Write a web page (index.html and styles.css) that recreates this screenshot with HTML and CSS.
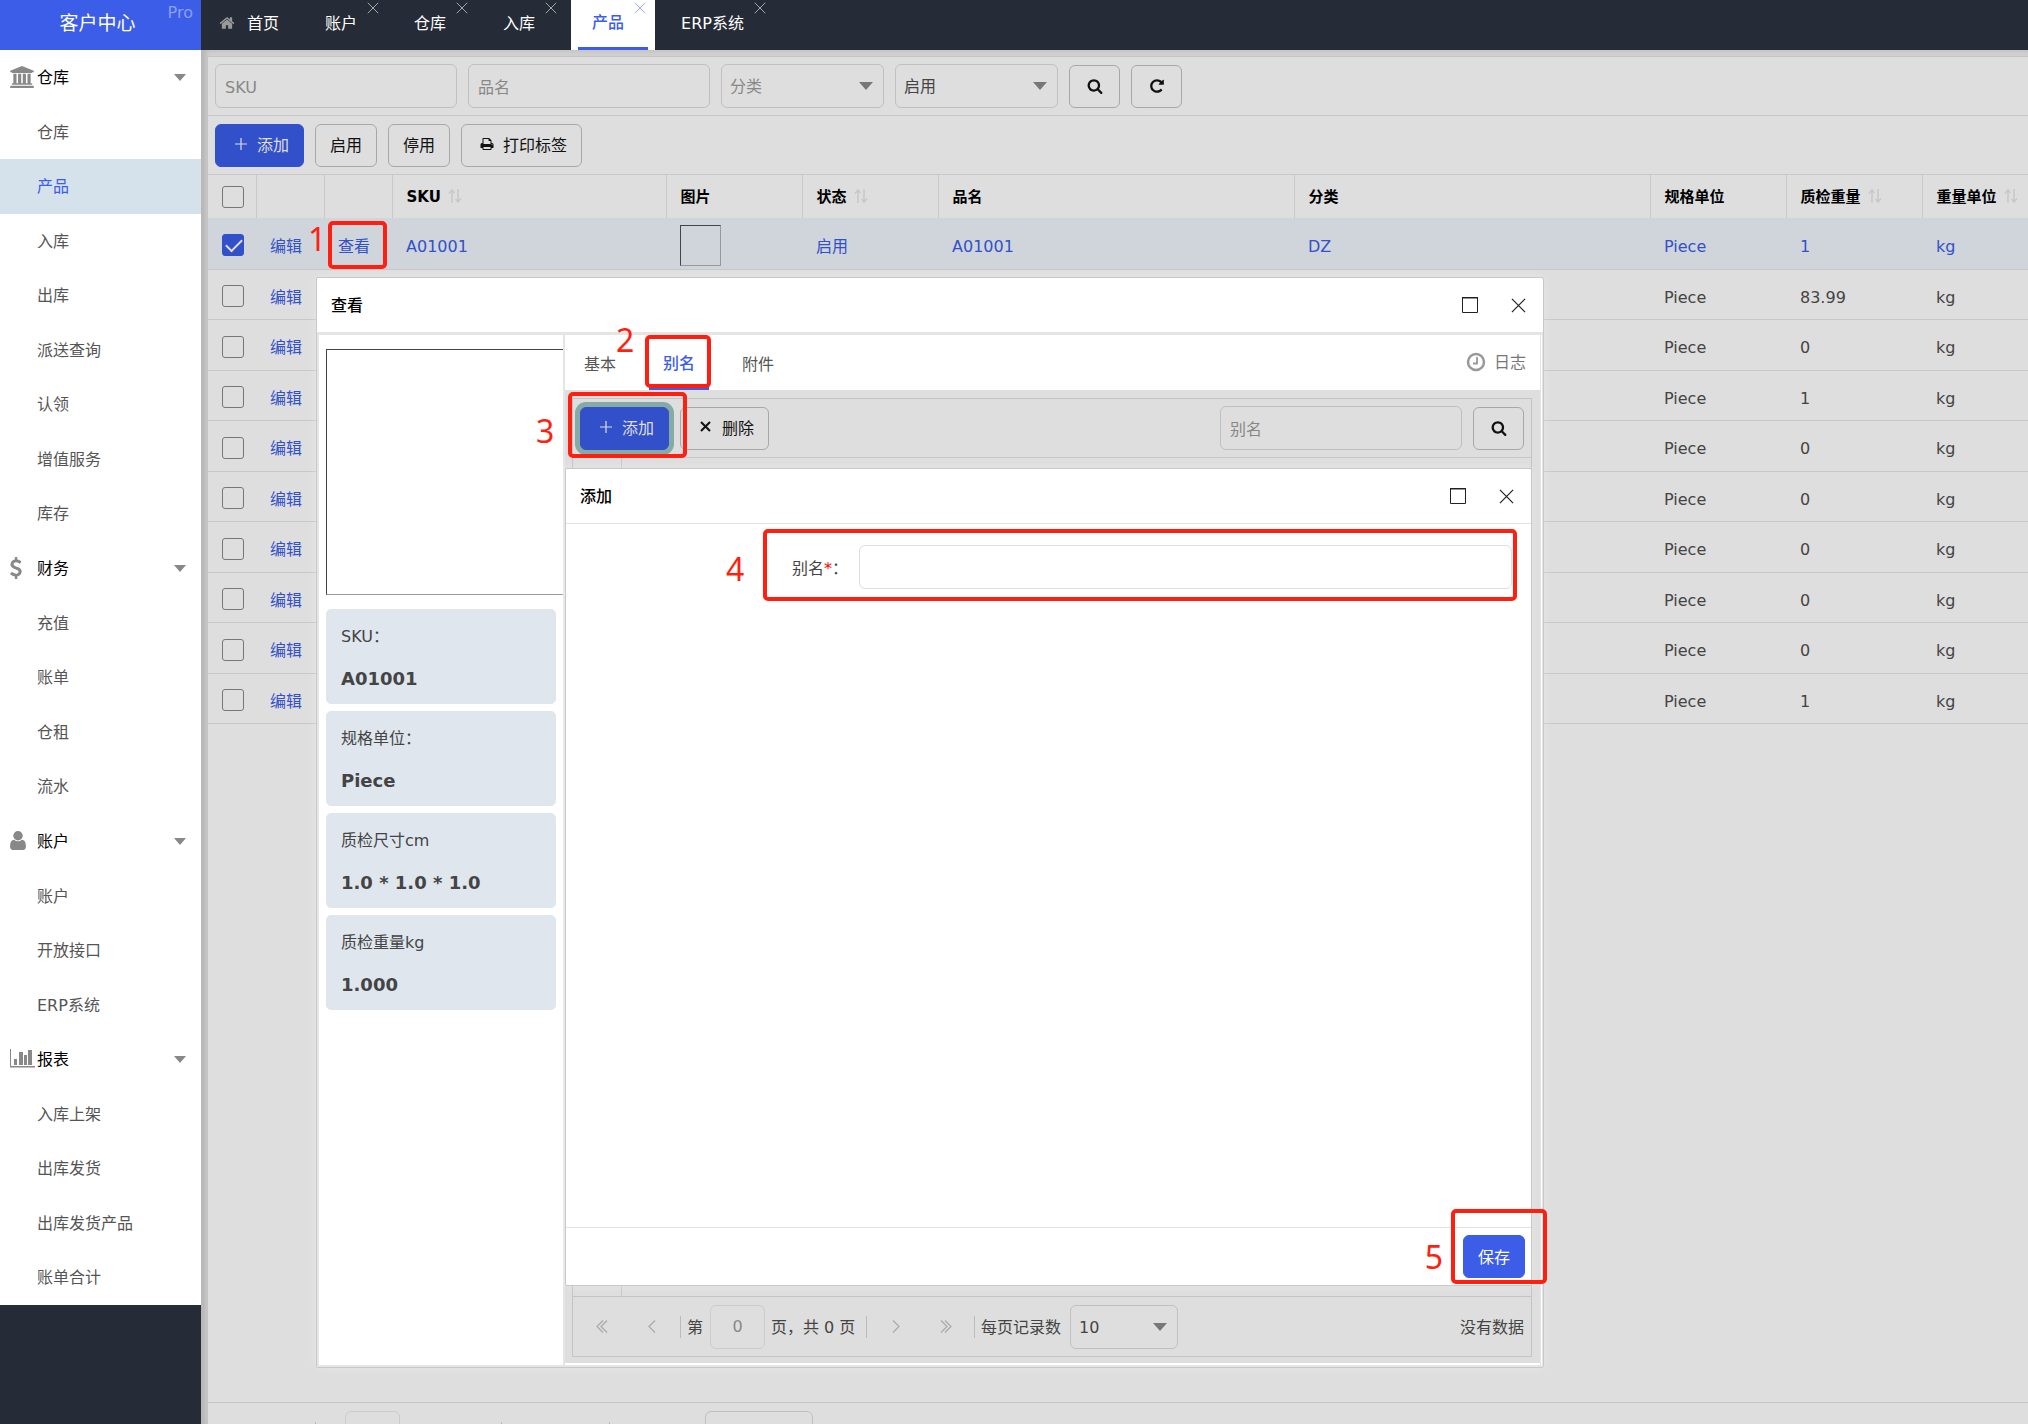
FILE: index.html
```html
<!DOCTYPE html>
<html lang="zh-CN">
<head>
<meta charset="utf-8">
<title>客户中心 - 产品</title>
<link rel="stylesheet" href="styles.css">
</head>
<body>
<svg class="defs" aria-hidden="true">
  <symbol id="i-home" viewBox="0 0 1792 1792"><path d="M1472 992v480q0 26-19 45t-45 19h-384v-384h-256v384h-384q-26 0-45-19t-19-45v-480q0-1 .5-3t.5-3l575-474 575 474q1 2 1 6zm223-69l-62 74q-8 9-21 11h-3q-13 0-21-7l-692-577-692 577q-12 8-24 7-13-2-21-11l-62-74q-8-10-7-23.5t11-21.5l719-599q32-26 76-26t76 26l244 204v-195q0-14 9-23t23-9h192q14 0 23 9t9 23v408l219 182q10 8 11 21.5t-7 23.5z"/></symbol>
  <symbol id="i-search" viewBox="0 0 1792 1792"><path d="M1216 832q0-185-131.5-316.5t-316.5-131.5-316.5 131.5-131.5 316.5 131.5 316.5 316.5 131.5 316.5-131.5 131.5-316.5zm512 832q0 52-38 90t-90 38q-54 0-90-38l-343-342q-179 124-399 124-143 0-273.5-55.5t-225-150-150-225-55.5-273.5 55.5-273.5 150-225 225-150 273.5-55.5 273.5 55.5 225 150 150 225 55.5 273.5q0 220-124 399l343 343q37 37 37 90z"/></symbol>
  <symbol id="i-repeat" viewBox="0 0 1792 1792"><path d="M1664 256v448q0 26-19 45t-45 19h-448q-42 0-59-40-17-39 14-69l138-138q-148-137-349-137-104 0-198.5 40.5t-163.5 109.5-109.5 163.5-40.5 198.5 40.5 198.5 109.5 163.5 163.5 109.5 198.5 40.5q119 0 225-52t179-147q7-10 23-12 15 0 25 9l137 138q9 8 9.5 20.5t-7.5 22.5q-109 132-264 204.5t-327 72.5q-156 0-298-61t-245-164-164-245-61-298 61-298 164-245 245-164 298-61q147 0 284.5 55.5t244.5 156.5l130-129q29-31 70-14 39 17 39 59z"/></symbol>
  <symbol id="i-print" viewBox="0 0 1792 1792"><path d="M448 1536h896v-256h-896v256zm0-640h896v-384h-160q-40 0-68-28t-28-68v-160h-640v640zm1152 64q0-26-19-45t-45-19-45 19-19 45 19 45 45 19 45-19 19-45zm128 0v416q0 13-9.5 22.5t-22.5 9.5h-224v160q0 40-28 68t-68 28h-960q-40 0-68-28t-28-68v-160h-224q-13 0-22.5-9.5t-9.5-22.5v-416q0-79 56.5-135.5t135.5-56.5h64v-544q0-40 28-68t68-28h672q40 0 88 20t76 48l152 152q28 28 48 76t20 88v256h64q79 0 135.5 56.5t56.5 135.5z"/></symbol>
  <symbol id="i-bank" viewBox="0 0 1920 1792"><path d="M960 0l960 384v128h-128q0 26-20.5 45t-48.5 19h-1526q-28 0-48.5-19t-20.5-45h-128v-128zm-704 640h256v768h128v-768h256v768h128v-768h256v768h128v-768h256v768h59q28 0 48.5 19t20.5 45v64h-1664v-64q0-26 20.5-45t48.5-19h59v-768zm1595 960q28 0 48.5 19t20.5 45v128h-1920v-128q0-26 20.5-45t48.5-19h1782z"/></symbol>
  <symbol id="i-user" viewBox="256 128 1280 1536"><path d="M1536 1399q0 109-62.5 187t-150.5 78h-854q-88 0-150.5-78t-62.5-187q0-85 8.5-160.5t31.5-152 58.5-131 94-89 134.5-34.5q131 128 313 128t313-128q76 0 134.5 34.5t94 89 58.5 131 31.5 152 8.5 160.5zm-256-887q0 159-112.5 271.5t-271.5 112.5-271.5-112.5-112.5-271.5 112.5-271.5 271.5-112.5 271.5 112.5 112.5 271.5z"/></symbol>
  <symbol id="i-dollar" viewBox="430 0 940 1792"><path d="M1362 1185q0 153-99.5 263.5t-258.5 136.5v175q0 14-9 23t-23 9h-135q-13 0-22.5-9.5t-9.5-22.5v-175q-66-9-127.5-31t-101.5-44.5-74-48-46.5-37.5-17.5-18q-17-21-2-41l103-135q7-10 23-12 15-2 24 9l2 2q113 99 243 125 37 8 74 8 81 0 142.5-43t61.5-122q0-28-15-53t-33.5-42-58.5-37.5-66-32-80-32.5q-39-16-61.5-25t-61.5-26.5-62.5-31-56.5-35.5-53.5-42.5-43.5-49-35.5-58-21-66.5-8.5-78q0-138 98-242t255-134v-180q0-13 9.5-22.5t22.5-9.5h135q14 0 23 9t9 23v176q57 6 110.5 23t87 33.5 63.5 37.5 39 29 15 14q17 18 5 38l-81 146q-8 15-23 16-14 3-27-7-3-3-14.5-12t-39-26.5-58.5-32-74.5-26-85.5-11.5q-95 0-155 43t-60 111q0 26 8.5 48t29.5 41.5 39.5 33 56 31 60.5 27 70 27.5q53 20 81 31.5t76 35 75.5 42.5 62 50 53 63.5 31.5 76.5 13 94z"/></symbol>
  <symbol id="i-chart" viewBox="0 0 25 19"><path d="M0 0h1v17h24v1.500H0zM4 10h3v6H4zM9 3h4v13H9zM14 6h3v10h-3zM18 1h4v15h-4z"/></symbol>
  <symbol id="i-clock" viewBox="0 0 20 20"><circle cx="10" cy="10" r="8" fill="none" stroke="currentColor" stroke-width="2.500"/><path d="M11 5v6.500H7" fill="none" stroke="currentColor" stroke-width="1.800"/></symbol>
  <symbol id="i-close" viewBox="0 0 16 16"><path d="M1 1l14 14M15 1L1 15" fill="none" stroke="currentColor" stroke-width="1.300"/></symbol>
  <symbol id="i-times" viewBox="0 0 14 14"><path d="M2 2l9 9M11 2l-9 9" fill="none" stroke="currentColor" stroke-width="2"/></symbol>
  <symbol id="i-max" viewBox="0 0 18 18"><path d="M1.500 1v15.500h15V1" fill="none" stroke="currentColor"/><path d="M1 1h16v1.500H1z"/></symbol>
  <symbol id="i-plus" viewBox="0 0 14 14"><path d="M7 1v12M1 7h12" fill="none" stroke="currentColor" stroke-width="1.200"/></symbol>
  <symbol id="i-sort" viewBox="0 0 14 14"><path d="M4 14V1M1 4.500L4 1l2.500 3M10 0v13M7.500 10l2.500 3 3-3.500" fill="none" stroke="currentColor" stroke-width="1.500"/></symbol>
  <symbol id="i-prev" viewBox="0 0 8 13"><path d="M7 .5L1 6.500l6 6" fill="none" stroke="currentColor" stroke-width="1.200"/></symbol>
  <symbol id="i-next" viewBox="0 0 8 13"><path d="M1 .5l6 6-6 6" fill="none" stroke="currentColor" stroke-width="1.200"/></symbol>
  <symbol id="i-first" viewBox="0 0 12 13"><path d="M7 .5L1 6.500l6 6M11 .5L5 6.500l6 6" fill="none" stroke="currentColor" stroke-width="1.200"/></symbol>
  <symbol id="i-last" viewBox="0 0 12 13"><path d="M1 .5l6 6-6 6M5 .5l6 6-6 6" fill="none" stroke="currentColor" stroke-width="1.200"/></symbol>
</svg>

<div class="app">
  <aside class="sidebar">
    <div class="logo">客户中心<span class="logo-tag">Pro</span></div>
    <nav class="menu">
      <section>
        <button class="menu-head" type="button"><svg class="ic-bank"><use href="#i-bank"/></svg><span>仓库</span></button>
        <ul><li><a href="#">仓库</a></li><li class="active"><a href="#">产品</a></li><li><a href="#">入库</a></li><li><a href="#">出库</a></li><li><a href="#">派送查询</a></li><li><a href="#">认领</a></li><li><a href="#">增值服务</a></li><li><a href="#">库存</a></li></ul>
      </section>
      <section>
        <button class="menu-head" type="button"><svg class="ic-dollar"><use href="#i-dollar"/></svg><span>财务</span></button>
        <ul><li><a href="#">充值</a></li><li><a href="#">账单</a></li><li><a href="#">仓租</a></li><li><a href="#">流水</a></li></ul>
      </section>
      <section>
        <button class="menu-head" type="button"><svg class="ic-user"><use href="#i-user"/></svg><span>账户</span></button>
        <ul><li><a href="#">账户</a></li><li><a href="#">开放接口</a></li><li><a href="#">ERP系统</a></li></ul>
      </section>
      <section>
        <button class="menu-head" type="button"><svg class="ic-chart"><use href="#i-chart"/></svg><span>报表</span></button>
        <ul><li><a href="#">入库上架</a></li><li><a href="#">出库发货</a></li><li><a href="#">出库发货产品</a></li><li><a href="#">账单合计</a></li></ul>
      </section>
    </nav>
  </aside>

  <div class="content">
    <header class="tabs">
      <a class="tab home" href="#"><svg><use href="#i-home"/></svg>首页</a>
      <a class="tab" href="#">账户<svg class="tab-x"><use href="#i-close"/></svg></a>
      <a class="tab" href="#">仓库<svg class="tab-x"><use href="#i-close"/></svg></a>
      <a class="tab" href="#">入库<svg class="tab-x"><use href="#i-close"/></svg></a>
      <a class="tab current" href="#">产品<svg class="tab-x"><use href="#i-close"/></svg></a>
      <a class="tab" href="#">ERP系统<svg class="tab-x"><use href="#i-close"/></svg></a>
    </header>

    <main class="stage">
      <div class="panel">
        <form class="bar">
          <input class="field" type="text" placeholder="SKU" aria-label="SKU">
          <input class="field" type="text" placeholder="品名" aria-label="品名">
          <span class="pick"><select class="blank" aria-label="分类"><option>分类</option></select></span>
          <span class="pick"><select aria-label="状态"><option>启用</option></select></span>
          <button class="btn icon" type="button" aria-label="搜索"><svg><use href="#i-search"/></svg></button>
          <button class="btn icon" type="button" aria-label="刷新"><svg><use href="#i-repeat"/></svg></button>
        </form>
        <div class="bar">
          <button class="btn primary with-icon" type="button"><svg><use href="#i-plus"/></svg>添加</button>
          <button class="btn" type="button">启用</button>
          <button class="btn" type="button">停用</button>
          <button class="btn with-icon" type="button"><svg class="ic-print"><use href="#i-print"/></svg>打印标签</button>
        </div>
        <table class="grid">
          <colgroup><col class="c-check"><col class="c-act"><col class="c-act"><col class="c-sku"><col class="c-mid"><col class="c-mid"><col class="c-wide"><col class="c-wide"><col class="c-mid"><col class="c-mid"><col></colgroup>
          <thead><tr>
            <th><input type="checkbox" aria-label="全选"></th><th></th><th></th>
            <th>SKU<svg><use href="#i-sort"/></svg></th><th>图片</th><th>状态<svg><use href="#i-sort"/></svg></th><th>品名</th><th>分类</th><th>规格单位</th><th>质检重量<svg><use href="#i-sort"/></svg></th><th>重量单位<svg><use href="#i-sort"/></svg></th>
          </tr></thead>
          <tbody>
            <tr class="selected"><td><input type="checkbox" checked aria-label="选择"></td><td><a href="#">编辑</a></td><td><a href="#">查看</a></td><td>A01001</td><td class="pic"><span class="thumb"></span></td><td>启用</td><td>A01001</td><td>DZ</td><td>Piece</td><td>1</td><td>kg</td></tr>
            <tr><td><input type="checkbox" aria-label="选择"></td><td><a href="#">编辑</a></td><td></td><td></td><td></td><td></td><td></td><td></td><td>Piece</td><td>83.99</td><td>kg</td></tr>
            <tr><td><input type="checkbox" aria-label="选择"></td><td><a href="#">编辑</a></td><td></td><td></td><td></td><td></td><td></td><td></td><td>Piece</td><td>0</td><td>kg</td></tr>
            <tr><td><input type="checkbox" aria-label="选择"></td><td><a href="#">编辑</a></td><td></td><td></td><td></td><td></td><td></td><td></td><td>Piece</td><td>1</td><td>kg</td></tr>
            <tr><td><input type="checkbox" aria-label="选择"></td><td><a href="#">编辑</a></td><td></td><td></td><td></td><td></td><td></td><td></td><td>Piece</td><td>0</td><td>kg</td></tr>
            <tr><td><input type="checkbox" aria-label="选择"></td><td><a href="#">编辑</a></td><td></td><td></td><td></td><td></td><td></td><td></td><td>Piece</td><td>0</td><td>kg</td></tr>
            <tr><td><input type="checkbox" aria-label="选择"></td><td><a href="#">编辑</a></td><td></td><td></td><td></td><td></td><td></td><td></td><td>Piece</td><td>0</td><td>kg</td></tr>
            <tr><td><input type="checkbox" aria-label="选择"></td><td><a href="#">编辑</a></td><td></td><td></td><td></td><td></td><td></td><td></td><td>Piece</td><td>0</td><td>kg</td></tr>
            <tr><td><input type="checkbox" aria-label="选择"></td><td><a href="#">编辑</a></td><td></td><td></td><td></td><td></td><td></td><td></td><td>Piece</td><td>0</td><td>kg</td></tr>
            <tr><td><input type="checkbox" aria-label="选择"></td><td><a href="#">编辑</a></td><td></td><td></td><td></td><td></td><td></td><td></td><td>Piece</td><td>1</td><td>kg</td></tr>
          </tbody>
        </table>
        <footer class="pager">
          <span class="nav-pair"></span>
          <i class="sep"></i><span class="page-label"></span><input class="page-no" type="text" aria-label="页码"><span class="page-total"></span><i class="sep"></i>
          <span class="nav-pair"></span>
          <i class="sep"></i><span class="size-label"></span><span class="pick small"><select aria-label="每页记录数"><option></option></select></span>
        </footer>
      </div>
    </main>
  </div>

  <section class="dialog view-dialog">
    <header class="dialog-head"><h2>查看</h2><button type="button" aria-label="最大化"><svg class="ic-max"><use href="#i-max"/></svg></button><button type="button" aria-label="关闭"><svg><use href="#i-close"/></svg></button></header>
    <div class="view-body">
      <div class="summary">
        <div class="photo"></div>
        <dl>
          <div class="card"><dt>SKU：</dt><dd>A01001</dd></div>
          <div class="card"><dt>规格单位：</dt><dd>Piece</dd></div>
          <div class="card"><dt>质检尺寸cm</dt><dd>1.0 * 1.0 * 1.0</dd></div>
          <div class="card"><dt>质检重量kg</dt><dd>1.000</dd></div>
        </dl>
      </div>
      <div class="detail">
        <nav class="subtabs">
          <a href="#">基本</a><a class="current" href="#">别名</a><a href="#">附件</a>
          <a class="log" href="#"><svg><use href="#i-clock"/></svg>日志</a>
        </nav>
        <div class="detail-area">
          <div class="sheet">
            <div class="bar">
              <button class="btn primary with-icon focused" type="button"><svg><use href="#i-plus"/></svg>添加</button>
              <button class="btn with-icon" type="button"><svg><use href="#i-times"/></svg>删除</button>
              <input class="field push" type="text" placeholder="别名" aria-label="别名">
              <button class="btn icon" type="button" aria-label="搜索"><svg><use href="#i-search"/></svg></button>
            </div>
            <div class="sheet-cols"></div>
            <footer class="pager">
              <span class="nav-pair"><button type="button" aria-label="首页"><svg class="ic-dbl"><use href="#i-first"/></svg></button><button type="button" aria-label="上一页"><svg class="ic-one"><use href="#i-prev"/></svg></button></span>
              <i class="sep"></i><span class="page-label">第</span><input class="page-no" type="text" value="0" aria-label="页码"><span class="page-total">页，共 0 页</span><i class="sep"></i>
              <span class="nav-pair"><button type="button" aria-label="下一页"><svg class="ic-one"><use href="#i-next"/></svg></button><button type="button" aria-label="末页"><svg class="ic-dbl"><use href="#i-last"/></svg></button></span>
              <i class="sep"></i><span class="size-label">每页记录数</span><span class="pick small"><select aria-label="每页记录数"><option>10</option></select></span>
              <span class="push">没有数据</span>
            </footer>
          </div>
          <section class="dialog add-dialog">
            <header class="dialog-head"><h2>添加</h2><button type="button" aria-label="最大化"><svg class="ic-max"><use href="#i-max"/></svg></button><button type="button" aria-label="关闭"><svg><use href="#i-close"/></svg></button></header>
            <form class="form">
              <label for="alias">别名<b>*</b>：</label>
              <input class="field" id="alias" type="text">
            </form>
            <footer class="dialog-foot"><button class="btn primary" type="button">保存</button></footer>
          </section>
        </div>
      </div>
    </div>
  </section>

  <span class="mark m1"></span><span class="num n1">1</span>
  <span class="mark m2"></span><span class="num n2">2</span>
  <span class="mark m3"></span><span class="num n3">3</span>
  <span class="mark m4"></span><span class="num n4">4</span>
  <span class="mark m5"></span><span class="num n5">5</span>
</div>
</body>
</html>
```

FILE: styles.css
```css
* { box-sizing: border-box; }

body {
  margin: 0;
  color: #444;
  font: 16px/24px "DejaVu Sans", "Noto Sans CJK SC", sans-serif;
}

button, input, select { margin: 0; font: inherit; color: inherit; }
a { color: inherit; text-decoration: none; }
svg { display: block; flex: none; fill: currentColor; }
ul, dl, dd, h2 { margin: 0; padding: 0; list-style: none; }
.defs { position: absolute; width: 0; height: 0; }

.app {
  position: relative;
  display: flex;
  height: 100vh;
  overflow: hidden;
}

/* sidebar */
.sidebar { flex: none; width: 201px; background: #252b37; }
.logo {
  position: relative;
  height: 50px;
  padding-right: 6px;
  background: #3c5de8;
  color: #fff;
  font-size: 19px;
  line-height: 46px;
  text-align: center;
}
.logo-tag {
  position: absolute;
  top: 0;
  right: 8px;
  color: #8b9ff2;
  font-size: 16px;
  line-height: 26px;
}
.menu { background: #fff; }
.menu-head {
  position: relative;
  display: flex;
  align-items: center;
  width: 100%;
  height: 55px;
  padding: 0 0 0 37px;
  border: 0;
  background: none;
  color: #000;
}
.menu-head svg { position: absolute; left: 10px; margin-bottom: 2px; color: #888; }
.menu-head::after {
  content: "";
  margin: 0 15px 0 auto;
  border: 6px solid transparent;
  border-top: 7px solid #888;
  border-bottom: 0;
}
.ic-bank { width: 24px; height: 22px; }
.ic-dollar { width: 12px; height: 22px; }
.ic-user { width: 16px; height: 19px; }
.ic-chart { width: 25px; height: 19px; }
.menu a { display: block; height: 54px; padding-left: 37px; color: #555; line-height: 56px; }
.menu li:nth-child(even) a { height: 55px; }
.menu .active a { background: #d5e2eb; color: #3c5de8; }

/* top tabs */
.content { display: flex; flex: 1; flex-direction: column; min-width: 0; }
.tabs { display: flex; flex: none; gap: 5px; height: 50px; background: #252b37; }
.tab {
  position: relative;
  padding: 0 31px 0 21px;
  color: #fff;
  line-height: 48px;
}
.home { display: flex; align-items: center; gap: 12px; padding: 0 20px 2px 18px; line-height: 24px; }
.home svg { width: 16px; height: 16px; margin-bottom: 3px; color: #999; }
.tab-x { position: absolute; top: 2px; right: 9px; width: 12px; height: 12px; color: #aaa; }
.current.tab { background: #fff; color: #3c5de8; font-weight: 500; line-height: 46px; }
.current .tab-x { color: #9aabf3; }
.current.tab::after {
  content: "";
  position: absolute;
  right: 7px;
  bottom: 0;
  left: 7px;
  height: 3px;
  background: #3c5de8;
}

/* list page */
.stage {
  flex: 1;
  min-height: 0;
  padding: 6px 0 0 6px;
  background: #d0d0d0;
  box-shadow: inset 5px 0 5px rgba(0, 0, 0, .12);
}
.panel {
  display: flex;
  flex-direction: column;
  height: calc(100% + 38px);
  border-top: 1px solid #c4c4c4;
  border-left: 1px solid #c4c4c4;
  background: #dedede;
}
.bar {
  display: flex;
  flex: none;
  align-items: center;
  gap: 11px;
  height: 59px;
  padding: 0 7px;
  border-bottom: 1px solid #c8c8c8;
}
.field, .pick select, .page-no {
  height: 44px;
  border: 1px solid #c0c0c0;
  border-radius: 6px;
  outline: 0;
  background: transparent;
}
.field { width: 242px; padding: 2px 9px 0; }
.field::placeholder { color: #888; opacity: 1; }
.pick { position: relative; display: block; width: 163px; }
.pick select { display: block; width: 100%; padding: 2px 8px 0; appearance: none; }
.pick .blank { color: #888; }
.pick::after {
  content: "";
  position: absolute;
  top: 18px;
  right: 11px;
  border: 7px solid transparent;
  border-top: 8px solid #777;
  border-bottom: 0;
  pointer-events: none;
}
.pick.small { width: 108px; }
.btn {
  height: 43px;
  padding: 2px 14px 0;
  border: 1px solid #a8a8a8;
  border-radius: 6px;
  background: transparent;
  color: #111;
}
.primary { border-color: #3350cb; background: #3350cb; color: #dedede; }
.with-icon { display: flex; align-items: center; gap: 9px; padding-left: 18px; }
.with-icon svg { width: 14px; height: 14px; margin-bottom: 4px; }
.icon { width: 51px; padding: 0; }
.icon svg { width: 16px; height: 16px; margin: 0 auto; }
.push { margin-left: auto; }

.grid { width: 100%; table-layout: fixed; border-collapse: collapse; }
.c-check { width: 48px; }
.c-act { width: 68px; }
.c-sku { width: 274px; }
.c-mid { width: 136px; }
.c-wide { width: 356px; }
th, td { padding: 0 0 0 14px; text-align: left; white-space: nowrap; }
th { height: 43px; border-left: 1px solid #c8c8c8; color: #000; font-size: 15px; }
th:first-child { border-left: 0; }
th svg { display: inline-block; width: 14px; height: 14px; margin-left: 7px; color: #c8c8c8; vertical-align: -1px; }
td { height: 50px; padding-top: 7px; border-bottom: 1px solid #c8c8c8; }
td:first-child { padding-top: 4px; }
tr:nth-child(odd) td { height: 51px; }
td a { color: #3350cb; }
.grid .selected td { background: #cfd5da; color: #3350cb; }
.grid .pic { padding-top: 4px; }
.thumb, .photo { display: block; border: 1px solid #999; border-top-color: #444; border-left-color: #444; }
.thumb { width: 41px; height: 41px; }
.grid input {
  display: block;
  width: 22px;
  height: 22px;
  border: 1px solid #777;
  border-radius: 3px;
  appearance: none;
}
.grid input:checked { border-color: #3350cb; background: #3350cb; }
.grid input:checked::before {
  content: "";
  display: block;
  width: 14px;
  height: 7px;
  margin: 4px 3px;
  border: solid #dedede;
  border-width: 0 0 2px 2px;
  transform: rotate(-45deg);
}

/* pager */
.pager {
  display: flex;
  flex: none;
  align-items: center;
  height: 60px;
  margin-top: auto;
  padding-right: 7px;
  border-top: 1px solid #c4c4c4;
}
.nav-pair { display: flex; width: 107px; justify-content: center; gap: 10px; }
.nav-pair button { display: grid; width: 40px; height: 40px; place-items: center; padding: 0; border: 0; background: none; color: #aaa; }
.ic-dbl { width: 12px; height: 13px; }
.ic-one { width: 8px; height: 13px; }
.sep { flex: none; width: 1px; height: 22px; background: #bbb; }
.page-label { width: 29px; padding-left: 6px; }
.page-no { width: 55px; padding: 0; border-color: #ccc; color: #888; text-align: center; }
.page-total { width: 101px; padding-left: 6px; white-space: nowrap; }
.page-total, .page-label, .size-label, .pager .push { padding-top: 2px; }
.size-label { width: 95px; padding-left: 6px; }

/* dialogs */
.dialog {
  position: absolute;
  display: flex;
  flex-direction: column;
  border: 1px solid #c8c8c8;
  border-radius: 2px;
  background: #fff;
  box-shadow: 0 0 10px rgba(255, 255, 255, .3);
}
.dialog-head {
  display: flex;
  flex: none;
  align-items: center;
  gap: 12px;
  height: 54px;
  padding: 0 6px 0 14px;
}
.dialog-head h2 { margin-right: auto; padding-top: 2px; color: #000; font-size: 16px; font-weight: 500; }
.dialog-head button { display: grid; width: 37px; height: 37px; place-items: center; padding: 0; border: 0; background: none; color: #222; }
.dialog-head svg { width: 15px; height: 15px; }
.dialog-head .ic-max { width: 18px; height: 18px; }

.view-dialog { top: 277px; right: 484px; bottom: 56px; left: 316px; }
.view-body {
  display: flex;
  flex: 1;
  gap: 2px;
  min-height: 0;
  padding: 3px 3px 2px 2px;
  background: #e5e5e5;
}
.summary { width: 244px; padding: 14px 7px 0; overflow: hidden; background: #fff; }
.photo { width: 246px; height: 246px; margin-bottom: 14px; }
.card {
  height: 95px;
  margin-bottom: 7px;
  padding: 15px 14px;
  border: 1px solid #e3e6e8;
  border-radius: 5px;
  background: #dfe6ed;
}
.card dd { margin-top: 18px; font-size: 18px; font-weight: 700; }

.detail {
  display: flex;
  flex: 1;
  flex-direction: column;
  min-width: 0;
  padding-bottom: 2px;
  background: #fff;
  box-shadow: 1px 0 0 #e5e5e5, 2px 0 0 #fff;
}
.subtabs { display: flex; flex: none; gap: 19px; height: 55px; padding: 0 0 0 5px; }
.subtabs a { height: 55px; padding: 0 14px; color: #555; line-height: 59px; }
.subtabs .current { border-bottom: 3px solid #3c5de8; color: #3c5de8; font-weight: 500; line-height: 57px; }
.subtabs .log { display: flex; align-items: center; gap: 8px; margin-left: auto; padding-right: 14px; color: #777; }
.log svg { width: 20px; height: 20px; margin-bottom: 2px; color: #999; }
.detail-area { position: relative; display: flex; flex: 1; padding: 8px 8px 6px 7px; background: #dedede; }
.sheet { display: flex; flex: 1; flex-direction: column; border: 1px solid #c4c4c4; }
.focused { box-shadow: 0 0 0 5px #86aba5; }
.sheet-cols { width: 49px; flex: 1; border-right: 1px solid #c8c8c8; }
.sheet .pager { margin: 0; }

.add-dialog { top: 78px; right: 8px; bottom: 77px; left: 0; }
.form {
  display: flex;
  flex: 1;
  align-items: flex-start;
  padding: 21px 19px 0 226px;
  border-top: 1px solid #e3e3e3;
}
.form label { width: 67px; line-height: 48px; white-space: nowrap; }
.form b { color: #f00; font-weight: 400; }
.form .field { flex: 1; border-color: #dcdfe6; }
.dialog-foot {
  display: flex;
  flex: none;
  align-items: center;
  justify-content: flex-end;
  height: 58px;
  padding-right: 6px;
  border-top: 1px solid #e3e3e3;
}
.dialog-foot .primary { border-color: #3c5de8; background: #3c5de8; color: #fff; }

/* step callouts */
.mark { position: absolute; border: 4px solid #ff1f10; border-radius: 5px; pointer-events: none; }
.num {
  position: absolute;
  color: #ff1f10;
  font: 32px/32px "Noto Sans", sans-serif;
  pointer-events: none;
}
.m1 { top: 221px; left: 328px; width: 59px; height: 48px; }
.m2 { top: 335px; left: 645px; width: 66px; height: 53px; }
.m3 { top: 392px; left: 568px; width: 119px; height: 66px; }
.m4 { top: 529px; right: 511px; left: 763px; height: 72px; }
.m5 { right: 481px; bottom: 140px; width: 96px; height: 75px; }
.n1 { top: 223px; left: 308px; }
.n2 { top: 324px; left: 616px; }
.n3 { top: 415px; left: 536px; }
.n4 { top: 553px; left: 726px; }
.n5 { right: 585px; bottom: 151px; }
```
